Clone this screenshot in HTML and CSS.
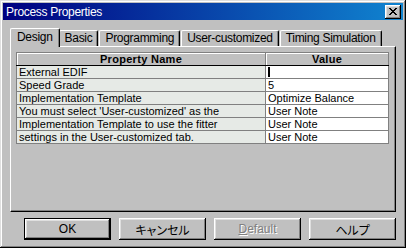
FILE: index.html
```html
<!DOCTYPE html>
<html lang="ja">
<head>
  <meta charset="UTF-8">
  <meta name="viewport" content="width=device-width, initial-scale=1.0">
  <title>Process Properties</title>
  <link rel="stylesheet" href="styles.css">
</head>
<body>
  <div class="window">
    <div class="titlebar">
      <span class="title">Process Properties</span>
      <button type="button" class="close">
        <svg width="8" height="7" viewBox="0 0 8 7" shape-rendering="crispEdges">
          <path d="M0 0h2v1H0z M6 0h2v1H6z M1 1h2v1H1z M5 1h2v1H5z M2 2h4v1H2z M3 3h2v1H3z M2 4h4v1H2z M1 5h2v1H1z M5 5h2v1H5z M0 6h2v1H0z M6 6h2v1H6z" fill="#000"/>
        </svg>
      </button>
    </div>
    <div class="content">
      <ul class="tabs">
        <li class="tab active">Design</li>
        <li class="tab">Basic</li>
        <li class="tab">Programming</li>
        <li class="tab">User-customized</li>
        <li class="tab">Timing Simulation</li>
      </ul>
      <div class="panel">
        <table class="props">
          <colgroup>
            <col class="col-name">
            <col>
          </colgroup>
          <thead>
            <tr><th>Property Name</th><th>Value</th></tr>
          </thead>
          <tbody>
            <tr><td class="name">External EDIF</td><td><span class="caret"></span></td></tr>
            <tr><td class="name">Speed Grade</td><td>5</td></tr>
            <tr><td class="name">Implementation Template</td><td>Optimize Balance</td></tr>
            <tr><td class="name">You must select 'User-customized' as the</td><td>User Note</td></tr>
            <tr><td class="name">Implementation Template to use the fitter</td><td>User Note</td></tr>
            <tr><td class="name">settings in the User-customized tab.</td><td>User Note</td></tr>
          </tbody>
        </table>
      </div>
      <div class="buttons">
        <button type="button" class="btn default">OK</button>
        <button type="button" class="btn jp">キャンセル</button>
        <button type="button" class="btn" disabled><u>D</u>efault</button>
        <button type="button" class="btn jp">ヘルプ</button>
      </div>
    </div>
  </div>
</body>
</html>
```

FILE: styles.css
```css
body {
  margin: 0;
  background: #c0c0c0;
  font-family: "Liberation Sans", Arial, sans-serif;
}
.window {
  width: 406px;
  height: 248px;
  box-sizing: border-box;
  padding: 3px;
  background: #c0c0c0;
  box-shadow: inset -1px -1px #000, inset 1px 1px #dfdfdf, inset -2px -2px #808080, inset 2px 2px #fff;
}

/* title bar */
.titlebar {
  height: 17px;
  display: flex;
  align-items: center;
  justify-content: space-between;
  padding: 0 2px 0 3px;
  background: linear-gradient(to right, #000080, #1084d0);
  color: #fff;
}
.title {
  font-size: 12px;
  letter-spacing: -0.3px;
}
.close {
  width: 16px;
  height: 14px;
  padding: 0;
  border: 0;
  display: flex;
  align-items: center;
  justify-content: center;
  background: #c0c0c0;
  box-shadow: inset -1px -1px #000, inset 1px 1px #fff, inset -2px -2px #808080, inset 2px 2px #dfdfdf;
}

.content {
  padding: 8px 7px 0 7px;
}

/* tabs */
.tabs {
  list-style: none;
  margin: 0;
  padding: 0 0 0 2px;
  display: flex;
  align-items: flex-end;
  gap: 1px;
}
.tab {
  height: 16px;
  box-sizing: border-box;
  padding: 0 5px;
  font-size: 12px;
  letter-spacing: -0.3px;
  line-height: 14px;
  border-top: 1px solid #fff;
  border-left: 1px solid #fff;
  border-right: 1px solid #000;
  border-radius: 2px 2px 0 0;
  box-shadow: inset -1px 0 #808080;
  background: #c0c0c0;
}
.tab.active {
  height: 19px;
  padding: 1px 6px 0;
  margin: 0 -2px -1px;
  position: relative;
  z-index: 1;
}

.panel {
  height: 166px;
  box-sizing: border-box;
  padding: 5px 6px 5px 5px;
  border-top: 1px solid #fff;
  border-left: 1px solid #fff;
  border-right: 1px solid #000;
  border-bottom: 1px solid #000;
  box-shadow: inset -1px -1px #808080;
}

/* property grid */
.props {
  width: 100%;
  border-collapse: collapse;
  table-layout: fixed;
  font-size: 11px;
}
.col-name {
  width: 249px;
}
.props th,
.props td {
  height: 12px;
  padding: 0 2px;
  line-height: 12px;
  border: 1px solid #808080;
  white-space: nowrap;
  overflow: hidden;
  text-align: left;
  background: #fff;
}
.props th {
  text-align: center;
  font-weight: bold;
  letter-spacing: 0.3px;
  background: #c0c0c0;
  border-bottom-color: #000;
  box-shadow: inset 1px 1px #fff;
}
.props td.name {
  background: #e6eae6;
}
.caret {
  display: inline-block;
  width: 2px;
  height: 10px;
  margin-top: 1px;
  vertical-align: top;
  background: #000;
}

/* dialog buttons */
.buttons {
  margin-top: 6px;
  display: flex;
  justify-content: flex-end;
  gap: 8px;
}
.btn {
  width: 87px;
  height: 22px;
  padding: 0;
  border: 0;
  font-family: "Liberation Sans", Arial, sans-serif;
  font-size: 12px;
  color: #000;
  background: #c0c0c0;
  box-shadow: inset -1px -1px #000, inset 1px 1px #fff, inset -2px -2px #808080, inset 2px 2px #dfdfdf;
}
.btn.jp {
  font-family: "Noto Sans CJK JP", sans-serif;
  font-feature-settings: "palt";
}
.btn.default {
  box-shadow: inset 0 0 0 1px #000, inset -2px -2px #000, inset 2px 2px #fff, inset -3px -3px #808080, inset 3px 3px #dfdfdf;
}
.btn:disabled {
  color: #808080;
  text-shadow: 1px 1px #fff;
}
```
